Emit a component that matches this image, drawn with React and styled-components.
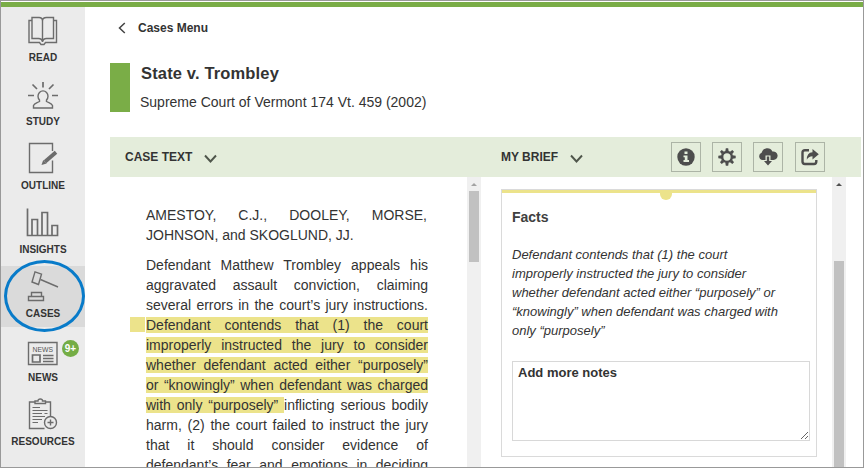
import React from "react";
import styled, { createGlobalStyle } from "styled-components";

const Global = createGlobalStyle`
  * { box-sizing: border-box; }
  body { margin: 0; background: #fff; font-family: "Liberation Sans", Arial, sans-serif; color: #333; }
  h1, h2, p { margin: 0; }
`;

const Frame = styled.div`
  width: 864px;
  height: 468px;
  border: 1px solid #999;
  padding-top: 1px;
  display: flex;
  flex-direction: column;
  overflow: hidden;
`;

const TopBar = styled.div`
  flex: none;
  height: 5px;
  background: #7aad47;
`;

const Body = styled.div`
  flex: 1;
  min-height: 0;
  display: flex;
`;

const Sidebar = styled.nav`
  flex: none;
  width: 84px;
  background: #ebebeb;
  padding-top: 3px;
  display: flex;
  flex-direction: column;
  gap: 3px;
`;

const NavItem = styled.a`
  position: relative;
  flex: none;
  height: 61px;
  padding-top: 4px;
  display: flex;
  flex-direction: column;
  align-items: center;
  background: ${(p) => (p.$active ? "#dadada" : "transparent")};
`;

const NavIcon = styled.svg`
  width: 36px;
  height: 34px;
  fill: none;
  stroke: #6c6c6c;
  stroke-width: 1.4;
  overflow: visible;
`;

const NavLabel = styled.span`
  margin-top: 4px;
  font-size: 10px;
  line-height: 12px;
  font-weight: bold;
  color: #333;
`;

const Ring = styled.span`
  position: absolute;
  z-index: 1;
  left: 3px;
  top: -6px;
  width: 81px;
  height: 72px;
  border: 3px solid #087bc9;
  border-radius: 50%;
`;

const Badge = styled.span`
  position: absolute;
  left: 61px;
  top: 10px;
  width: 17px;
  height: 17px;
  border-radius: 50%;
  background: #74ad45;
  color: #fff;
  font-size: 10px;
  line-height: 17px;
  font-weight: bold;
  text-align: center;
`;

const Main = styled.main`
  flex: 1;
  min-width: 0;
  padding: 12px 2px 0 25px;
  display: flex;
  flex-direction: column;
`;

const BackLink = styled.a`
  display: flex;
  align-items: center;
  height: 17px;
  padding-left: 8px;
  gap: 12px;
  font-size: 12px;
  font-weight: bold;
`;

const Heading = styled.header`
  margin-top: 27px;
  height: 49px;
  display: flex;
  border-left: 20px solid #7aad47;
  padding-left: 10px;
  flex-direction: column;
`;

const CaseName = styled.h1`
  font-size: 16.5px;
  line-height: 20px;
  letter-spacing: 0.15px;
  padding-left: 1px;
`;

const Citation = styled.p`
  margin-top: 9px;
  font-size: 14px;
  line-height: 20px;
`;

const PanelBar = styled.div`
  flex: none;
  margin-top: 25px;
  height: 40px;
  padding: 0 36px 0 15px;
  background: #e4eddb;
  display: flex;
  align-items: center;
`;

const PanelTitle = styled.button`
  border: 0;
  padding: 0;
  background: none;
  font: bold 12px "Liberation Sans", Arial, sans-serif;
  color: #333;
  display: flex;
  align-items: center;
  width: ${(p) => p.$w}px;
  gap: 12px;
  svg { margin-top: 4px; }
`;

const Tools = styled.div`
  margin-left: auto;
  display: flex;
  gap: 11px;
`;

const ToolButton = styled.button`
  width: 30px;
  height: 30px;
  padding: 0;
  border: 1px solid #acb4a6;
  background: transparent;
  color: #4d4d4d;
  display: flex;
  align-items: center;
  justify-content: center;
  &:last-child { margin-left: 1px; }
`;

const Panels = styled.div`
  flex: 1;
  min-height: 0;
  display: flex;
  overflow: hidden;
`;

const CasePanel = styled.section`
  flex: none;
  width: 371px;
  display: flex;
  overflow: hidden;
`;

const CaseText = styled.article`
  flex: 1;
  padding: 28px 39px 0 36px;
  font-size: 14px;
  line-height: 20px;
`;

const Paragraph = styled.p`
  text-align: justify;
  text-align-last: ${(p) => (p.$continues ? "justify" : "auto")};
  padding-right: ${(p) => (p.$continues ? 0 : 1)}px;
  margin-bottom: 10px;
`;

const Mark = styled.mark`
  position: relative;
  background: #ece38b;
  color: inherit;
  &::before {
    content: "";
    position: absolute;
    left: -16px;
    top: 0;
    width: 15px;
    height: 15px;
    background: #ece38b;
  }
`;

const Scrollbar = styled.div`
  flex: none;
  width: 14px;
  background: #f0f0f0;
  display: flex;
  flex-direction: column;
  align-items: center;
`;

const ScrollArrow = styled.span`
  margin-top: 6px;
  border: 3px solid transparent;
  border-top: 0;
  border-bottom: 3px solid ${(p) => p.$color};
`;

const ScrollThumb = styled.span`
  width: 10px;
  margin-top: ${(p) => p.$offset}px;
  height: ${(p) => p.$size};
  flex: ${(p) => (p.$size === "auto" ? 1 : "none")};
  background: #c1c1c1;
`;

const BriefPanel = styled.section`
  flex: none;
  width: 365px;
  display: flex;
  overflow: hidden;
`;

const BriefBody = styled.div`
  flex: 1;
  padding: 12px 15px 0 20px;
`;

const Card = styled.div`
  position: relative;
  width: 316px;
  height: 268px;
  border: 1px solid #dadada;
  padding: 0 6px 0 10px;
  &::before {
    content: "";
    display: block;
    height: 3px;
    margin: 0 -6px 0 -10px;
    background: #ece38b;
  }
  &::after {
    content: "";
    position: absolute;
    top: 3px;
    left: 158px;
    width: 12px;
    height: 7px;
    border-radius: 0 0 6px 6px;
    background: #ece38b;
  }
`;

const CardTitle = styled.h2`
  margin-top: 14px;
  font-size: 14px;
  line-height: 20px;
  color: #404040;
`;

const Excerpt = styled.p`
  margin-top: 18px;
  font-size: 13px;
  line-height: 19px;
  font-style: italic;
  width: 270px;
`;

const Notes = styled.textarea`
  display: block;
  margin-top: 21px;
  width: 298px;
  height: 80px;
  padding: 2px 5px;
  border: 1px solid #d8d8d8;
  border-radius: 0;
  outline: 0;
  font: bold 13px/18px "Liberation Sans", Arial, sans-serif;
  color: #333;
  &::placeholder { color: #333; opacity: 1; }
`;

const icons = {
  READ: (
    <>
      <path d="M7 6.500H4V28.500H14.500L16 30.500H19L20.500 28.500H31.500V6.500H28.500" />
      <path d="M7 3.500H14Q17.500 3.500 17.500 7V28Q17 24.500 13.500 24.500H7ZM28.500 3.500H21.500Q17.500 3.500 17.500 7V28Q18 24.500 21.500 24.500H28.500Z" />
    </>
  ),
  STUDY: (
    <>
      <path d="M14.500 22A5 5.300 0 1 1 21.500 22V23.500C24 25 26.500 25 27.500 27.500V30H8.500V27.500C9.500 25 12 25 14.500 23.500Z" />
      <path d="M18 4V9.500M7.500 6.500L12 11M28.500 6.500L24 11M3 17.500H9M27 17.500H33" strokeWidth="1.700" />
    </>
  ),
  OUTLINE: (
    <>
      <path d="M27.500 18.500V30.500H4.500V1.500H27.500V9" />
      <path d="M20 19.800L31 10.300" strokeWidth="3.800" />
      <path d="M16.500 23L18.200 18L21.700 21.600Z" fill="#6c6c6c" stroke="none" />
    </>
  ),
  INSIGHTS: (
    <path strokeWidth="1.700" d="M2.500 2.500V29.500H32.500V19.500H27V29.500M22.500 29.500V6.500H17V29.500M12.500 29.500V13.500H7V29.500" />
  ),
  CASES: (
    <>
      <path d="M10 1.800L16.500 4.200L13.500 14.500L7 12Z" />
      <path d="M15.500 9.500L33 17" />
      <path d="M6.500 26.500V22.500H16.500V26.500M3.500 26.500H18.500V30.500H3.500Z" />
    </>
  ),
  NEWS: (
    <>
      <path d="M3.500 8.500H32V30.500H3.500Z" />
      <path d="M7.500 21H15V28H7.500ZM18 21.500H28.500M18 24.500H28.500M18 27.500H28.500" strokeWidth="1.700" />
      <text x="17.800" y="17.500" textAnchor="middle" fontSize="6.800" fill="#555" stroke="none">NEWS</text>
    </>
  ),
  RESOURCES: (
    <>
      <path d="M10 4H4.500V30.500H19.500M20.500 4H25.500V18.500" />
      <path d="M10 5.500V3H13Q13 1 15.300 1T17.500 3H20.500V5.500Z" />
      <path d="M7.500 9.500H15M7.500 12.500H22.500M7.500 15.500H17M19.500 15.500H22.500M7.500 18.500H20M7.500 21.500H17M7.500 24.500H13" strokeWidth="1.200" />
      <circle cx="25.500" cy="24.500" r="6" />
      <path d="M25.500 21.500V27.500M22.500 24.500H28.500" />
    </>
  ),
};

const Chevron = () => (
  <svg width="13" height="10" viewBox="0 0 13 10" fill="none" stroke="#4f564b" strokeWidth="1.900">
    <path d="M1 1.500L6.500 7.500L12 1.500" />
  </svg>
);

const InfoIcon = () => (
  <svg width="18" height="18" viewBox="0 0 18 18">
    <circle cx="9" cy="9" r="8.700" fill="currentColor" />
    <path d="M7.500 3.500H10.500V6H7.500ZM6.500 7.500H10.500V12H12V14H6.500V12H7.800V9.300H6.500Z" fill="#e4eddb" />
  </svg>
);

const GearIcon = () => (
  <svg width="18" height="18" viewBox="-9 -9 18 18">
    <circle r="4.900" fill="none" stroke="currentColor" strokeWidth="2.500" />
    {[0, 45, 90, 135, 180, 225, 270, 315].map((a) => (
      <path key={a} d="M-1.700 -5.500L-1.200 -8.700H1.200L1.700 -5.500Z" fill="currentColor" transform={`rotate(${a})`} />
    ))}
  </svg>
);

const CloudIcon = () => (
  <svg width="20" height="18" viewBox="0 0 20 18">
    <path d="M4.500 12A3.800 3.800 0 0 1 3.600 4.700A5.800 5.800 0 0 1 14.400 3.500A4.300 4.300 0 1 1 15.500 12Z" fill="currentColor" />
    <path d="M7.500 7.500H12.500V12H15.200L10 18L4.800 12H7.500Z" fill="#e4eddb" />
    <path d="M8.800 8.500H11.200V13H14L10 17.500L6 13H8.800Z" fill="currentColor" />
  </svg>
);

const ShareIcon = () => (
  <svg width="18" height="18" viewBox="0 0 18 18">
    <path d="M8 2.200H4Q1.500 2.200 1.500 4.700V13.500Q1.500 16 4 16H13Q15.300 16 15.300 13.500V12" fill="none" stroke="currentColor" strokeWidth="2.400" />
    <path d="M11.500 1L17.800 6.200L11.500 11.400V8.200Q7.500 8.200 5.800 11.800Q5.800 4.500 11.500 4.300Z" fill="currentColor" />
  </svg>
);

export default function App() {
  return (
    <Frame>
      <Global />
      <TopBar />
      <Body>
        <Sidebar>
          {Object.keys(icons).map((name) => (
            <NavItem key={name} $active={name === "CASES"}>
              <NavIcon viewBox="0 0 36 34">{icons[name]}</NavIcon>
              <NavLabel>{name}</NavLabel>
              {name === "CASES" && <Ring />}
              {name === "NEWS" && <Badge>9+</Badge>}
            </NavItem>
          ))}
        </Sidebar>
        <Main>
          <BackLink>
            <svg width="8" height="12" viewBox="0 0 8 12" fill="none" stroke="#444" strokeWidth="1.500">
              <path d="M6.800 1L1.500 6L6.800 11" />
            </svg>
            Cases Menu
          </BackLink>
          <Heading>
            <CaseName>State v. Trombley</CaseName>
            <Citation>Supreme Court of Vermont 174 Vt. 459 (2002)</Citation>
          </Heading>
          <PanelBar>
            <PanelTitle $w={376}>CASE TEXT <Chevron /></PanelTitle>
            <PanelTitle $w={100}>MY BRIEF <Chevron /></PanelTitle>
            <Tools>
              <ToolButton aria-label="Information"><InfoIcon /></ToolButton>
              <ToolButton aria-label="Settings"><GearIcon /></ToolButton>
              <ToolButton aria-label="Download"><CloudIcon /></ToolButton>
              <ToolButton aria-label="Share"><ShareIcon /></ToolButton>
            </Tools>
          </PanelBar>
          <Panels>
            <CasePanel>
              <CaseText>
                <Paragraph>AMESTOY, C.J., DOOLEY, MORSE, JOHNSON, and SKOGLUND, JJ.</Paragraph>
                <Paragraph $continues>
                  Defendant Matthew Trombley appeals his aggravated assault conviction, claiming several
                  errors in the court’s jury instructions.{" "}
                  <Mark>
                    Defendant contends that (1) the court improperly instructed the jury to consider
                    whether defendant acted either “purposely” or “knowingly” when defendant was charged
                    with only “purposely”{" "}
                  </Mark>
                  inflicting serious bodily harm, (2) the court failed to instruct the jury that it
                  should consider evidence of defendant’s fear and emotions in deciding
                </Paragraph>
              </CaseText>
              <Scrollbar>
                <ScrollArrow $color="#a3a3a3" />
                <ScrollThumb $offset={5} $size="71px" />
              </Scrollbar>
            </CasePanel>
            <BriefPanel>
              <BriefBody>
                <Card>
                  <CardTitle>Facts</CardTitle>
                  <Excerpt>
                    Defendant contends that (1) the court improperly instructed the jury to consider
                    whether defendant acted either “purposely” or “knowingly” when defendant was charged
                    with only “purposely”
                  </Excerpt>
                  <Notes placeholder="Add more notes" />
                </Card>
              </BriefBody>
              <Scrollbar>
                <ScrollArrow $color="#505050" />
                <ScrollThumb $offset={75} $size="auto" />
              </Scrollbar>
            </BriefPanel>
          </Panels>
        </Main>
      </Body>
    </Frame>
  );
}
